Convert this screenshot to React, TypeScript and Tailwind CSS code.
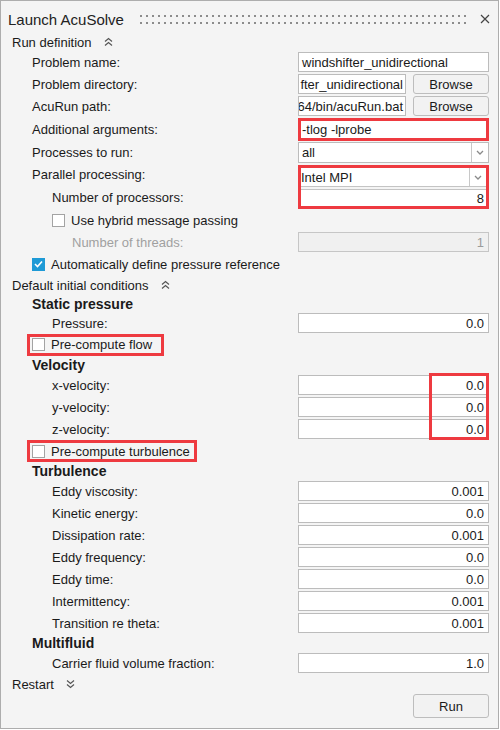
import React from "react";

const RED = "border-[#ee3a40]";

function Chevrons({ down }: { down?: boolean }) {
  return (
    <svg width="9" height="10" viewBox="0 0 9 10" className="ml-[12px]">
      <path
        d={
          down
            ? "M1 1.5 L4.5 4.5 L8 1.5 M1 5.5 L4.5 8.5 L8 5.5"
            : "M1 4.5 L4.5 1.5 L8 4.5 M1 8.5 L4.5 5.5 L8 8.5"
        }
        stroke="#555"
        fill="none"
        strokeWidth="1.2"
      />
    </svg>
  );
}

function Box({ checked }: { checked?: boolean }) {
  if (checked)
    return (
      <span className="w-[13px] h-[13px] bg-[#1e9ad6] flex items-center justify-center shrink-0">
        <svg width="9" height="8" viewBox="0 0 9 8">
          <path d="M1 4 L3.5 6.5 L8 1.5" stroke="#fff" strokeWidth="1.6" fill="none" />
        </svg>
      </span>
    );
  return <span className="w-[13px] h-[13px] border border-[#a3a3a3] bg-white shrink-0" />;
}

function Num({ v, disabled }: { v: string; disabled?: boolean }) {
  return (
    <div
      className={
        disabled
          ? "w-[191px] h-[20px] border border-[#c6c6c6] bg-[#f0f0f0] text-[#9b9b9b] flex items-center justify-end pr-[4px]"
          : "w-[191px] h-[20px] border border-[#bcbcbc] bg-white flex items-center justify-end pr-[4px]"
      }
    >
      {v}
    </div>
  );
}

function Row({
  label,
  indent,
  children,
  gray,
}: {
  label: string;
  indent: "a" | "b" | "c";
  children?: React.ReactNode;
  gray?: boolean;
}) {
  const pl = indent === "a" ? "pl-[31px]" : indent === "b" ? "pl-[51px]" : "pl-[71px]";
  return (
    <div className="flex items-center h-[22px] pr-[9px]">
      <div className={`flex-1 ${pl} ${gray ? "text-[#a0a0a0]" : ""}`}>{label}</div>
      {children}
    </div>
  );
}

function Header({ label, h }: { label: string; h: string }) {
  return (
    <div className={`flex items-center pl-[31px] font-bold text-[14px] ${h}`}>{label}</div>
  );
}

function Btn({ label, h }: { label: string; h: string }) {
  return (
    <div
      className={`w-[76px] ${h} border border-[#bdbdbd] rounded-[3px] bg-[#f2f2f2] flex items-center justify-center`}
    >
      {label}
    </div>
  );
}

function Arrow() {
  return (
    <div className="w-[17px] h-full border-l border-[#c8c8c8] flex items-center justify-center">
      <svg width="8" height="5" viewBox="0 0 8 5">
        <path d="M1 1 L4 4 L7 1" stroke="#8a8a8a" strokeWidth="1.3" fill="none" />
      </svg>
    </div>
  );
}

export default function App() {
  return (
    <div className="w-[500px] h-[730px] bg-white">
      <div className="w-[499px] h-[729px] border border-[#adadad] bg-[#f4f4f4] text-[13px] text-[#1a1a1a] font-['Liberation_Sans',Arial,sans-serif] leading-none flex flex-col">
        {/* Title */}
        <div className="h-[32px] pt-[4px] flex items-center pl-[7px] pr-[8px]">
          <span className="text-[15px] text-[#222]">Launch AcuSolve</span>
          <svg className="flex-1 ml-[16px]" height="9">
            <defs>
              <pattern id="dots" width="6" height="7" patternUnits="userSpaceOnUse">
                <rect x="0" y="0" width="2" height="2" fill="#8c8c8c" />
              </pattern>
            </defs>
            <rect x="0" y="0" width="100%" height="9" fill="url(#dots)" />
          </svg>
          <svg width="10" height="10" viewBox="0 0 10 10" className="ml-[10px]">
            <path d="M1 1 L9 9 M9 1 L1 9" stroke="#444" strokeWidth="1.2" />
          </svg>
        </div>

        {/* Run definition */}
        <div className="h-[18px] flex items-center pl-[11px]">
          <span>Run definition</span>
          <Chevrons />
        </div>

        <Row label="Problem name:" indent="a">
          <div className="w-[191px] h-[20px] border border-[#bcbcbc] bg-white flex items-center pl-[3px] whitespace-nowrap overflow-hidden">
            windshifter_unidirectional
          </div>
        </Row>
        <Row label="Problem directory:" indent="a">
          <div className="w-[191px] flex items-center justify-between">
            <div className="w-[108px] h-[20px] border border-[#bcbcbc] bg-white flex items-center justify-end pr-[2px] whitespace-nowrap overflow-hidden">
              <span>fter_unidirectional</span>
            </div>
            <Btn label="Browse" h="h-[20px]" />
          </div>
        </Row>
        <Row label="AcuRun path:" indent="a">
          <div className="w-[191px] flex items-center justify-between">
            <div className="w-[108px] h-[20px] border border-[#bcbcbc] bg-white flex items-center justify-end pr-[2px] whitespace-nowrap overflow-hidden">
              <span>64/bin/acuRun.bat</span>
            </div>
            <Btn label="Browse" h="h-[20px]" />
          </div>
        </Row>
        <div className="flex items-center h-[24px] pr-[9px]">
          <div className="flex-1 pl-[31px]">Additional arguments:</div>
          <div className={`w-[191px] h-[23px] border-[3px] ${RED} bg-white flex items-center pl-[1px]`}>
            -tlog -lprobe
          </div>
        </div>
        <Row label="Processes to run:" indent="a">
          <div className="w-[191px] h-[21px] border border-[#bcbcbc] bg-white flex items-center">
            <span className="flex-1 pl-[3px]">all</span>
            <Arrow />
          </div>
        </Row>

        {/* Parallel group */}
        <div className="flex h-[46px] pr-[9px]">
          <div className="flex-1 flex flex-col">
            <div className="h-[22px] flex items-center pl-[31px]">Parallel processing:</div>
            <div className="h-[24px] flex items-center pl-[51px]">Number of processors:</div>
          </div>
          <div className={`w-[191px] h-[44px] mt-[2px] border-[3px] ${RED} flex flex-col bg-[#f4f4f4]`}>
            <div className="h-[19px] bg-white border-b border-[#c4c4c4] flex items-center">
              <span className="flex-1 pl-[0px]">Intel MPI</span>
              <Arrow />
            </div>
            <div className="h-[2px]" />
            <div className="h-[17px] bg-white border-t border-[#c4c4c4] flex items-center justify-end pr-[2px]">
              8
            </div>
          </div>
        </div>

        <div className="h-[22px] flex items-center pl-[51px]">
          <Box />
          <span className="ml-[6px]">Use hybrid message passing</span>
        </div>
        <Row label="Number of threads:" indent="c" gray>
          <Num v="1" disabled />
        </Row>
        <div className="h-[22px] flex items-center pl-[31px]">
          <Box checked />
          <span className="ml-[6px]">Automatically define pressure reference</span>
        </div>

        {/* Default initial conditions */}
        <div className="h-[20px] flex items-center pl-[11px]">
          <span>Default initial conditions</span>
          <Chevrons />
        </div>
        <Header label="Static pressure" h="h-[18px]" />
        <div className="flex items-center h-[20px] pr-[9px]">
          <div className="flex-1 pl-[51px]">Pressure:</div>
          <Num v="0.0" />
        </div>
        <div className="h-[23px] flex items-center">
          <div className={`ml-[26px] w-[137px] h-[22px] border-[3px] ${RED} flex items-center pl-[2px]`}>
            <Box />
            <span className="ml-[6px]">Pre-compute flow</span>
          </div>
        </div>
        <Header label="Velocity" h="h-[18px]" />
        <div className="relative">
          <Row label="x-velocity:" indent="b">
            <Num v="0.0" />
          </Row>
          <Row label="y-velocity:" indent="b">
            <Num v="0.0" />
          </Row>
          <Row label="z-velocity:" indent="b">
            <Num v="0.0" />
          </Row>
          <div className={`absolute right-[9px] top-[-1px] w-[60px] h-[67px] border-[3px] ${RED}`} />
        </div>
        <div className="h-[22px] flex items-center">
          <div className={`ml-[26px] w-[170px] h-[22px] border-[3px] ${RED} flex items-center pl-[2px]`}>
            <Box />
            <span className="ml-[6px]">Pre-compute turbulence</span>
          </div>
        </div>
        <Header label="Turbulence" h="h-[18px]" />
        <Row label="Eddy viscosity:" indent="b">
          <Num v="0.001" />
        </Row>
        <Row label="Kinetic energy:" indent="b">
          <Num v="0.0" />
        </Row>
        <Row label="Dissipation rate:" indent="b">
          <Num v="0.001" />
        </Row>
        <Row label="Eddy frequency:" indent="b">
          <Num v="0.0" />
        </Row>
        <Row label="Eddy time:" indent="b">
          <Num v="0.0" />
        </Row>
        <Row label="Intermittency:" indent="b">
          <Num v="0.001" />
        </Row>
        <Row label="Transition re theta:" indent="b">
          <Num v="0.001" />
        </Row>
        <Header label="Multifluid" h="h-[18px]" />
        <Row label="Carrier fluid volume fraction:" indent="b">
          <Num v="1.0" />
        </Row>
        <div className="h-[20px] flex items-center pl-[11px]">
          <span>Restart</span>
          <Chevrons down />
        </div>
        <div className="flex justify-end pr-[9px]">
          <Btn label="Run" h="h-[24px]" />
        </div>
      </div>
    </div>
  );
}
